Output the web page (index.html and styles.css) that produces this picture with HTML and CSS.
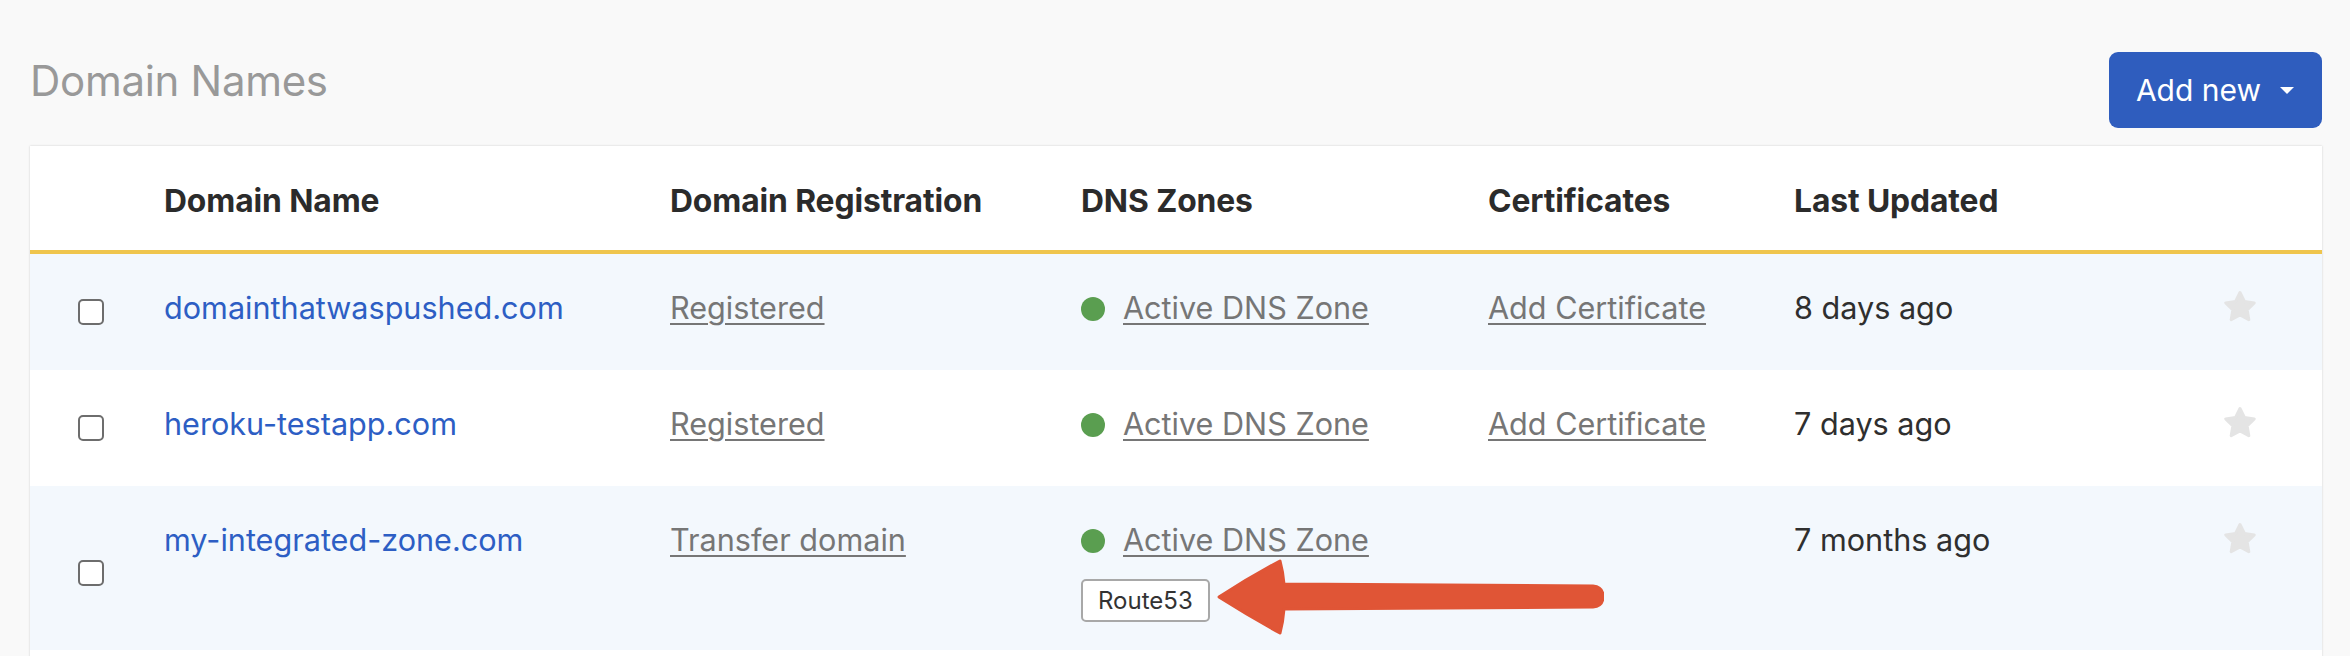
FILE: index.html
```html
<!DOCTYPE html>
<html lang="en">
<head>
<meta charset="utf-8">
<title>Domain Names</title>
<link rel="stylesheet" href="styles.css">
</head>
<body>
<div class="page">
  <div class="page-header">
    <h1 class="page-title">Domain Names</h1>
    <button class="btn-add" type="button">Add new <span class="caret"></span></button>
  </div>

  <div class="card">
    <table class="domains">
      <colgroup>
        <col class="col-check">
        <col class="col-name">
        <col class="col-reg">
        <col class="col-dns">
        <col class="col-cert">
        <col class="col-updated">
        <col class="col-star">
      </colgroup>
      <thead>
        <tr>
          <th></th>
          <th>Domain Name</th>
          <th>Domain Registration</th>
          <th>DNS Zones</th>
          <th>Certificates</th>
          <th>Last Updated</th>
          <th></th>
        </tr>
      </thead>
      <tbody>
        <tr class="row-alt">
          <td class="cell-check"><input type="checkbox" class="check"></td>
          <td><a class="domain-link" href="#">domainthatwaspushed.com</a></td>
          <td><a class="muted-link" href="#">Registered</a></td>
          <td><div class="zone"><span class="dot"></span><a class="muted-link" href="#">Active DNS Zone</a></div></td>
          <td><a class="muted-link" href="#">Add Certificate</a></td>
          <td class="updated">8 days ago</td>
          <td><svg class="star" viewBox="0 0 34 32" width="34" height="32"><path d="M17 2.5 L21.41 11.43 L31.27 12.86 L24.13 19.82 L25.82 29.64 L17 25 L8.18 29.64 L9.87 19.82 L2.73 12.86 L12.59 11.43 Z"/></svg></td>
        </tr>
        <tr>
          <td class="cell-check"><input type="checkbox" class="check"></td>
          <td><a class="domain-link" href="#">heroku-testapp.com</a></td>
          <td><a class="muted-link" href="#">Registered</a></td>
          <td><div class="zone"><span class="dot"></span><a class="muted-link" href="#">Active DNS Zone</a></div></td>
          <td><a class="muted-link" href="#">Add Certificate</a></td>
          <td class="updated">7 days ago</td>
          <td><svg class="star" viewBox="0 0 34 32" width="34" height="32"><path d="M17 2.5 L21.41 11.43 L31.27 12.86 L24.13 19.82 L25.82 29.64 L17 25 L8.18 29.64 L9.87 19.82 L2.73 12.86 L12.59 11.43 Z"/></svg></td>
        </tr>
        <tr class="row-alt row-tall">
          <td class="cell-check"><input type="checkbox" class="check"></td>
          <td><a class="domain-link" href="#">my-integrated-zone.com</a></td>
          <td><a class="muted-link" href="#">Transfer domain</a></td>
          <td>
            <div class="zone"><span class="dot"></span><a class="muted-link" href="#">Active DNS Zone</a></div>
            <div class="zone-tags">
              <span class="badge">Route53</span>
              <svg class="arrow" viewBox="0 0 392 82" width="392" height="82"><path d="M7 41 Q38 21 68 5 Q71 16 72 28 L381 30 Q391 31 391 40.5 Q391 50 381 51 L72 53 Q71 66 68 77 Q37 60 7 41 Z"/></svg>
            </div>
          </td>
          <td></td>
          <td class="updated">7 months ago</td>
          <td><svg class="star" viewBox="0 0 34 32" width="34" height="32"><path d="M17 2.5 L21.41 11.43 L31.27 12.86 L24.13 19.82 L25.82 29.64 L17 25 L8.18 29.64 L9.87 19.82 L2.73 12.86 L12.59 11.43 Z"/></svg></td>
        </tr>
        <tr>
          <td class="cell-check"></td>
          <td></td><td></td><td></td><td></td><td></td><td></td>
        </tr>
      </tbody>
    </table>
  </div>
</div>
</body>
</html>
```

FILE: styles.css
```css
html, body {
  margin: 0;
  padding: 0;
}

body {
  background: #f9f9f9;
  font-family: "Inter", "Roboto", "Liberation Sans", sans-serif;
  color: #333;
  overflow: hidden;
}

.page {
  padding: 52px 28px 0 30px;
}

.page-header {
  display: flex;
  justify-content: space-between;
  align-items: flex-start;
  margin-bottom: 18px;
}

.page-title {
  margin: 0;
  font-size: 42px;
  line-height: 58px;
  font-weight: 400;
  color: #999;
  letter-spacing: -0.3px;
}

.btn-add {
  display: inline-flex;
  align-items: center;
  gap: 19px;
  height: 76px;
  padding: 0 28px 0 27px;
  border: none;
  border-radius: 9px;
  background: #2f5dbe;
  color: #fff;
  font-family: inherit;
  font-size: 30px;
  font-weight: 400;
  cursor: pointer;
}

.caret {
  width: 0;
  height: 0;
  border-left: 7px solid transparent;
  border-right: 7px solid transparent;
  border-top: 7px solid #fff;
}

.card {
  background: #fff;
  box-shadow: 0 0 2px rgba(0, 0, 0, 0.18);
}

.domains {
  width: 100%;
  border-collapse: collapse;
  table-layout: fixed;
}

.col-check { width: 134px; }
.col-name { width: 506px; }
.col-reg { width: 411px; }
.col-dns { width: 407px; }
.col-cert { width: 306px; }
.col-updated { width: 429px; }
.col-star { width: 99px; }

.domains th {
  height: 104px;
  box-sizing: border-box;
  padding: 35px 0 29px;
  border-bottom: 4px solid #efc54d;
  text-align: left;
  vertical-align: top;
  font-size: 31.8px;
  line-height: 40px;
  font-weight: 700;
  color: #2b2b2b;
  letter-spacing: -0.1px;
}

.domains td {
  padding: 34px 0 42px;
  font-size: 30.6px;
  line-height: 40px;
  vertical-align: top;
  white-space: nowrap;
}

.domains .row-tall td {
  padding-bottom: 28px;
}

.row-alt td {
  background: #f3f8fd;
}

.domains .cell-check {
  vertical-align: middle;
  padding-left: 48px;
  padding-top: 38px;
  padding-bottom: 38px;
}

.check {
  appearance: none;
  -webkit-appearance: none;
  display: block;
  width: 26px;
  height: 26px;
  margin: 0;
  border: 2px solid #6d6d6d;
  border-radius: 5px;
  background: #fff;
}

.domain-link {
  color: #2d5ec4;
  text-decoration: none;
}

.muted-link {
  color: #767676;
  text-decoration: underline;
  text-decoration-thickness: 2px;
  text-underline-offset: 4px;
}

.zone {
  display: flex;
  align-items: center;
}

.dot {
  flex: none;
  width: 24px;
  height: 24px;
  border-radius: 50%;
  background: #5a9e50;
  margin-right: 18px;
  margin-top: 2px;
}

.updated {
  color: #2f2f2f;
}

.star {
  display: block;
  margin-top: 2px;
  fill: #e4e4e4;
  stroke: #e4e4e4;
  stroke-width: 3;
  stroke-linejoin: round;
}

.zone-tags {
  position: relative;
  display: flex;
  width: max-content;
  margin-top: 19px;
}

.badge {
  display: block;
  padding: 0 15px;
  border: 2px solid #a8a8a8;
  border-radius: 5px;
  font-size: 24px;
  line-height: 39px;
  color: #333;
  background: #fff;
}

.arrow {
  position: absolute;
  left: 131px;
  top: -23px;
  fill: #e05536;
  stroke: #e05536;
  stroke-width: 3;
  stroke-linejoin: round;
}
```
